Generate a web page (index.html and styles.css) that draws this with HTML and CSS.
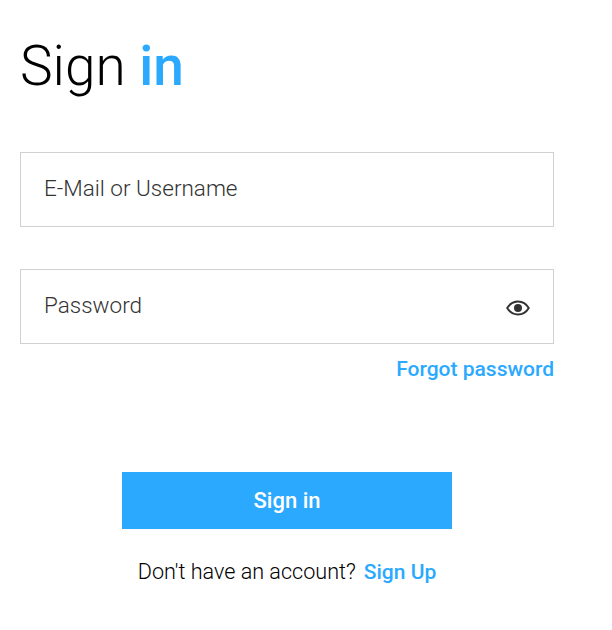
FILE: index.html
```html
<!DOCTYPE html>
<html lang="en">
  <head>
    <meta charset="UTF-8" />
    <meta name="viewport" content="width=device-width, initial-scale=1.0" />
    <title>Sign in</title>
    <link rel="stylesheet" href="styles.css">
  </head>
  <body>
    <div class="signin__container">
      <h1 class="title">Sign <span class="title__accent">in</span></h1>

      <div class="field field--login">
        <span class="field__label">E-Mail or Username</span>
      </div>

      <div class="field field--password">
        <span class="field__label">Password</span>
        <svg class="field__eye" width="24" height="16" viewBox="0 0 24 16" aria-hidden="true">
          <path fill="none" stroke="#333" stroke-width="2" stroke-linejoin="round" d="M1.200 8C3.600 4 7.500 1.500 12 1.500S20.400 4 22.800 8C20.400 12 16.500 14.500 12 14.500S3.600 12 1.200 8z"/>
          <circle fill="#333" cx="12" cy="8" r="4"/>
        </svg>
      </div>

      <div class="forgot__container">
        <a class="link" href="#">Forgot password</a>
      </div>

      <button class="btn">Sign in</button>

      <div class="signup__container">
        <span>Don't have an account?</span>
        <a class="link" href="#">Sign Up</a>
      </div>
    </div>
  </body>
</html>
```

FILE: styles.css
```css
body {
  margin: 0;
  background-color: #fff;
  font-family: Roboto, sans-serif;
}

.signin__container {
  width: 534px;
  margin-left: 20px;
  display: flex;
  flex-direction: column;
}

.title {
  margin: 32px 0 0;
  font-size: 55px;
  line-height: 68px;
  font-weight: 300;
  color: #000;
}

.title__accent {
  font-weight: 500;
  color: #2aa9ff;
}

.field {
  height: 75px;
  box-sizing: border-box;
  padding: 0 23px 4px;
  border: 1px solid #d0d0d0;
  display: flex;
  align-items: center;
  justify-content: space-between;
}

.field--login {
  margin-top: 52px;
}

.field--password {
  margin-top: 42px;
}

.field__label {
  font-size: 22.500px;
  font-weight: 300;
  color: #333;
}

.field__eye {
  margin-top: 7px;
}

.link {
  color: #2aa9ff;
  font-size: 21px;
  font-weight: 500;
  text-decoration: none;
}

.forgot__container {
  margin-top: 13px;
  text-align: right;
  line-height: 24px;
}

.btn {
  align-self: center;
  width: 330px;
  height: 57px;
  margin-top: 89px;
  background-color: #2aa9ff;
  color: white;
  border: none;
  font-family: Roboto, sans-serif;
  font-size: 22px;
  font-weight: 500;
}

.signup__container {
  margin-top: 30px;
  display: flex;
  justify-content: center;
  align-items: baseline;
  gap: 8px;
  font-size: 21.600px;
  font-weight: 300;
  line-height: 26px;
  color: #000;
}
```
